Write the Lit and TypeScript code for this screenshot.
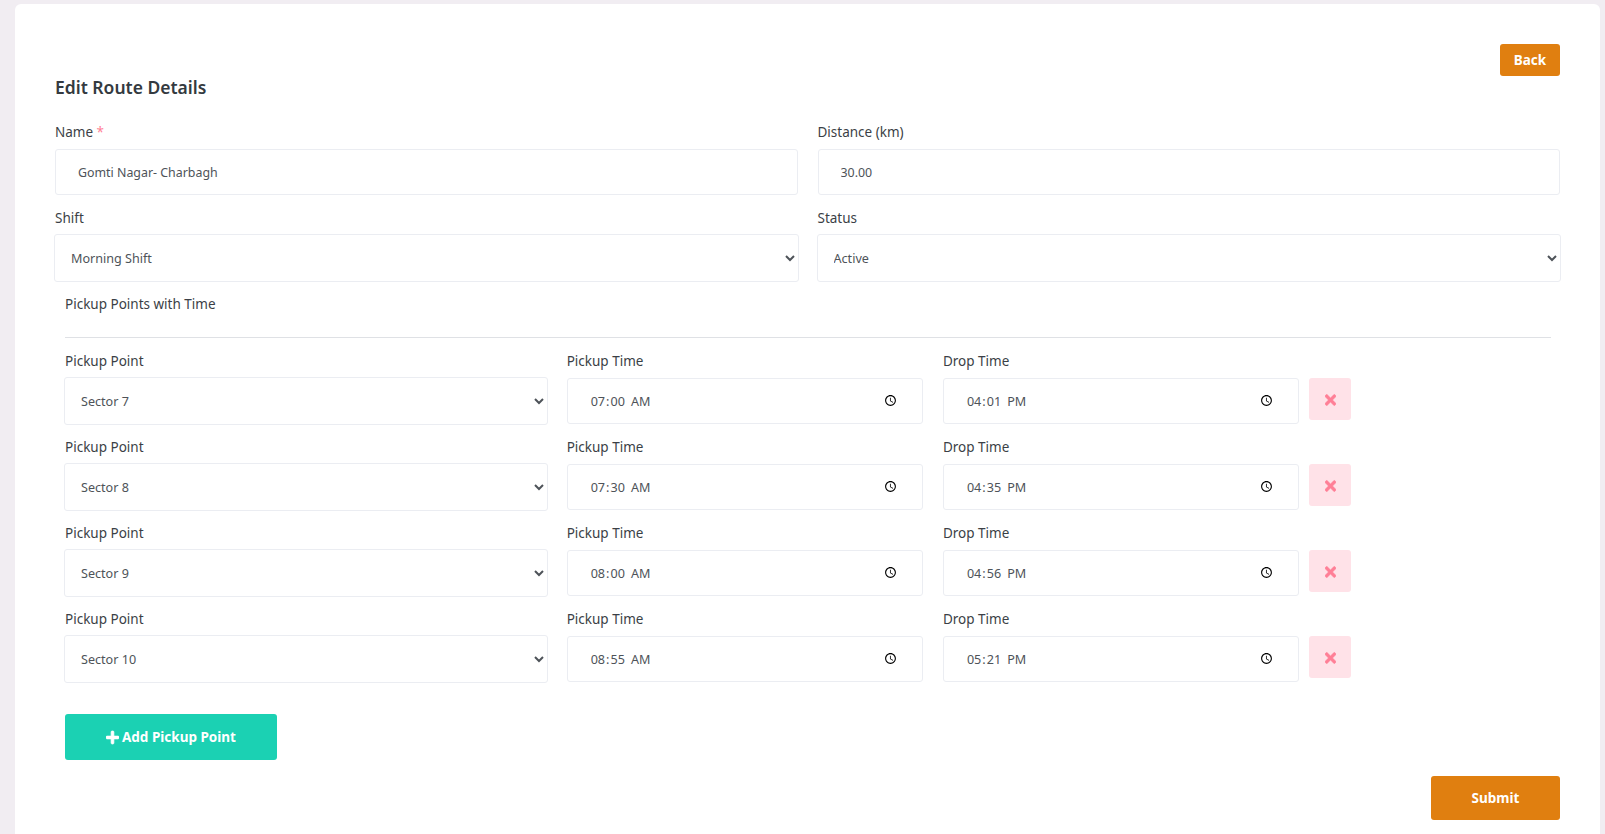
import { LitElement, html, css } from "lit";
import { customElement, state } from "lit/decorators.js";

const SECTORS = ["Sector 7", "Sector 8", "Sector 9", "Sector 10"];

@customElement("app-root")
export class AppRoot extends LitElement {
  @state() private _points = [
    { sector: "Sector 7", pickup: "07:00", drop: "16:01" },
    { sector: "Sector 8", pickup: "07:30", drop: "16:35" },
    { sector: "Sector 9", pickup: "08:00", drop: "16:56" },
    { sector: "Sector 10", pickup: "08:55", drop: "17:21" },
  ];

  static styles = css`
    :host {
      display: block;
      min-height: 834px;
      background: #f1edf2;
      font-family: "Noto Sans", sans-serif;
      font-size: 13.5px;
      color: #3b3f46;
      overflow: hidden;
    }
    .card {
      box-sizing: border-box;
      height: 830px;
      margin: 4px 5px 0 15px;
      padding: 40px;
      background: #fff;
      border-radius: 6px 6px 0 0;
    }
    .top {
      display: flex;
      justify-content: flex-end;
    }
    .back {
      width: 60px;
      height: 32px;
    }
    button {
      border: none;
      border-radius: 3px;
      font-family: inherit;
      font-size: 13.5px;
      font-weight: 700;
      color: #fff;
      background: #e07f10;
      cursor: pointer;
      padding: 0;
    }
    h4 {
      margin: 0 0 24px;
      font-size: 17.5px;
      line-height: 22px;
      font-weight: 600;
      color: #343a40;
    }
    .grid2 {
      display: grid;
      grid-template-columns: 1fr 1fr;
      column-gap: 20px;
    }
    .field {
      display: flex;
      flex-direction: column;
      min-width: 0;
      margin-bottom: 13px;
    }
    label {
      display: block;
      line-height: 20px;
      margin-bottom: 7px;
    }
    .req {
      color: #ff7f96;
    }
    input,
    select {
      box-sizing: border-box;
      height: 46px;
      width: 100%;
      border: 1px solid #ebedf2;
      border-radius: 3px;
      background: #fff;
      font-family: inherit;
      font-size: 12.4px;
      color: #4e5359;
      outline: none;
    }
    input {
      padding: 0 22px;
    }
    input[type="time"] {
      font-size: 12.6px;
    }
    input[type="time"]::-webkit-datetime-edit-ampm-field {
      margin-left: 2px;
    }
    select {
      height: 48px;
      width: calc(100% + 2px);
      margin: -1px -1px;
      padding: 0 12px;
      font-size: 12.6px;
    }
    .section {
      padding: 0 9px 0 10px;
    }
    .section-title {
      line-height: 20px;
      margin-bottom: 23px;
    }
    hr {
      border: none;
      border-top: 1px solid #dfe1e5;
      margin: 0 0 13px;
    }
    .point {
      display: grid;
      grid-template-columns: 4fr 3fr 3fr 2fr;
      margin: 0 -9px 0 -10px;
    }
    .point > .field {
      padding: 0 10px;
    }
    .remove {
      display: flex;
      align-items: center;
      justify-content: center;
      width: 42px;
      height: 42px;
      margin-top: 27px;
      background: #ffe2e8;
      border-radius: 3px;
    }
    .remove svg {
      width: 11px;
      height: 16px;
      margin-top: 1px;
      fill: #ff7f96;
      stroke: #ff7f96;
      stroke-width: 16;
    }
    .add {
      display: flex;
      align-items: center;
      justify-content: center;
      gap: 3px;
      width: 212px;
      height: 46px;
      margin-top: 19px;
      background: #1bd1b3;
    }
    .add svg {
      width: 13px;
      height: 15px;
      fill: #fff;
      stroke: #fff;
      stroke-width: 24;
    }
    .bottom {
      display: flex;
      justify-content: flex-end;
      margin-top: 16px;
    }
    .submit {
      width: 129px;
      height: 44px;
    }
  `;

  private _renderPoint(p: { sector: string; pickup: string; drop: string }) {
    return html`
      <div class="point">
        <div class="field">
          <label>Pickup Point</label>
          <select>
            ${SECTORS.map(
              (s) => html`<option ?selected=${s === p.sector}>${s}</option>`,
            )}
          </select>
        </div>
        <div class="field">
          <label>Pickup Time</label>
          <input type="time" .value=${p.pickup} />
        </div>
        <div class="field">
          <label>Drop Time</label>
          <input type="time" .value=${p.drop} />
        </div>
        <div>
          <button class="remove" aria-label="Remove">
            <svg viewBox="0 0 352 512">
              <path
                d="M242.72 256l100.07-100.07c12.28-12.28 12.28-32.19 0-44.48l-22.24-22.24c-12.28-12.28-32.19-12.28-44.48 0L176 189.28 75.93 89.21c-12.28-12.28-32.19-12.28-44.48 0L9.21 111.45c-12.28 12.28-12.28 32.19 0 44.48L109.28 256 9.21 356.07c-12.28 12.28-12.28 32.19 0 44.48l22.24 22.24c12.28 12.28 32.2 12.28 44.48 0L176 322.72l100.07 100.07c12.28 12.28 32.2 12.28 44.48 0l22.24-22.24c12.28-12.28 12.28-32.19 0-44.48L242.72 256z"
              />
            </svg>
          </button>
        </div>
      </div>
    `;
  }

  render() {
    return html`
      <div class="card">
        <div class="top"><button class="back">Back</button></div>
        <h4>Edit Route Details</h4>
        <div class="grid2">
          <div class="field">
            <label>Name <span class="req">*</span></label>
            <input type="text" value="Gomti Nagar- Charbagh" />
          </div>
          <div class="field">
            <label>Distance (km)</label>
            <input type="text" value="30.00" />
          </div>
          <div class="field">
            <label>Shift</label>
            <select><option>Morning Shift</option></select>
          </div>
          <div class="field">
            <label>Status</label>
            <select><option>Active</option></select>
          </div>
        </div>
        <div class="section">
          <div class="section-title">Pickup Points with Time</div>
          <hr />
          ${this._points.map((p) => this._renderPoint(p))}
          <button class="add">
            <svg viewBox="0 0 448 512">
              <path
                d="M416 208H272V64c0-17.67-14.33-32-32-32h-32c-17.67 0-32 14.33-32 32v144H32c-17.67 0-32 14.33-32 32v32c0 17.67 14.33 32 32 32h144v144c0 17.67 14.33 32 32 32h32c17.67 0 32-14.33 32-32V304h144c17.67 0 32-14.33 32-32v-32c0-17.67-14.33-32-32-32z"
              />
            </svg>
            Add Pickup Point
          </button>
        </div>
        <div class="bottom"><button class="submit">Submit</button></div>
      </div>
    `;
  }
}
